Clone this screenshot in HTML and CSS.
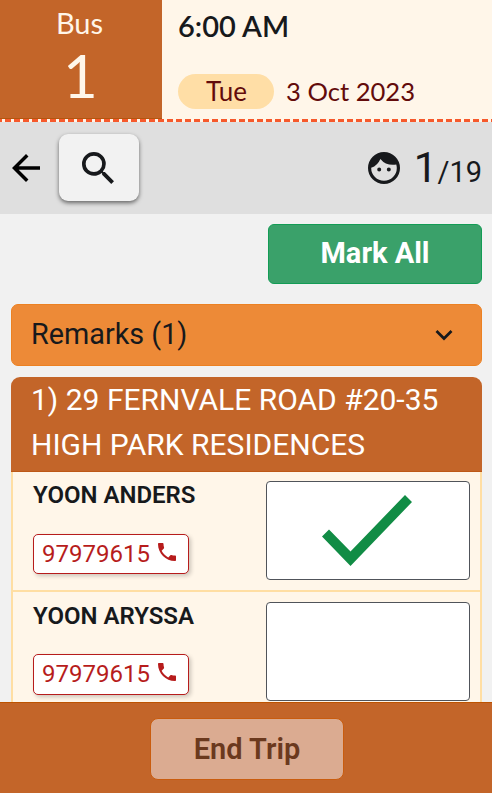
FILE: index.html
```html
<!DOCTYPE html>
<html lang="en">
<head>
<meta charset="utf-8">
<title>Bus 1</title>
<link rel="stylesheet" href="styles.css">
</head>
<body>
<div class="app">
  <header class="trip">
    <div class="bus"><span class="bus-label">Bus</span><span class="bus-number">1</span></div>
    <div class="schedule">
      <div class="time">6:00 AM</div>
      <div class="date"><span class="day">Tue</span><span class="full-date">3 Oct 2023</span></div>
    </div>
  </header>
  <div class="dashes"></div>
  <nav class="toolbar">
    <svg class="back" viewBox="4 4 16 16"><path d="M20 11H7.83l5.59-5.59L12 4l-8 8 8 8 1.41-1.41L7.83 13H20v-2z"/></svg>
    <button class="search"><svg viewBox="3 3 17.5 17.5"><path d="M15.5 14h-.79l-.28-.27A6.47 6.47 0 0 0 16 9.5 6.5 6.5 0 1 0 9.5 16c1.61 0 3.09-.59 4.23-1.57l.27.28v.79l5 4.99L20.49 19l-4.99-5zm-6 0a4.5 4.5 0 1 1 0-9 4.5 4.5 0 0 1 0 9z"/></svg></button>
    <div class="count">
      <svg class="face" viewBox="2 2 20 20"><path d="M10.25 13a1.25 1.25 0 1 1-2.5 0 1.25 1.25 0 0 1 2.5 0zM15 11.75a1.25 1.25 0 1 0 0 2.5 1.25 1.25 0 0 0 0-2.5zM22 12a10 10 0 1 1-20 0 10 10 0 0 1 20 0zm-2 0c0-.78-.12-1.53-.33-2.24-.7.15-1.42.24-2.17.24a10 10 0 0 1-7.76-3.69A10.02 10.02 0 0 1 4 11.86V12a8 8 0 0 0 16 0z"/></svg>
      <span class="present">1</span><span class="total">/19</span>
    </div>
  </nav>
  <main class="content">
    <button class="mark-all">Mark All</button>
    <div class="remarks"><span>Remarks (1)</span><svg class="chevron" viewBox="0 0 18 12"><path d="M1.500 2l7.500 7.500 7.500-7.500"/></svg></div>
    <section class="stop">
      <h2 class="address">1) 29 FERNVALE ROAD #20-35<br>HIGH PARK RESIDENCES</h2>
      <div class="rider">
        <div class="details">
          <div class="name">YOON ANDERS</div>
          <div class="phone">97979615<svg viewBox="3 3 18 18"><path d="M6.62 10.79c1.44 2.83 3.76 5.14 6.59 6.59l2.2-2.2c.27-.27.67-.36 1.02-.24 1.12.37 2.33.57 3.57.57.55 0 1 .45 1 1V20c0 .55-.45 1-1 1C10.61 21 3 13.39 3 4c0-.55.45-1 1-1h3.5c.55 0 1 .45 1 1 0 1.25.2 2.45.57 3.57.11.35.03.74-.25 1.02l-2.2 2.2z"/></svg></div>
        </div>
        <div class="mark"><svg viewBox="0 0 90 71"><path d="M0 41.500l7-7 21.500 22L83 0l7 7-61.500 64z"/></svg></div>
      </div>
      <div class="rider">
        <div class="details">
          <div class="name">YOON ARYSSA</div>
          <div class="phone">97979615<svg viewBox="3 3 18 18"><path d="M6.62 10.79c1.44 2.83 3.76 5.14 6.59 6.59l2.2-2.2c.27-.27.67-.36 1.02-.24 1.12.37 2.33.57 3.57.57.55 0 1 .45 1 1V20c0 .55-.45 1-1 1C10.61 21 3 13.39 3 4c0-.55.45-1 1-1h3.5c.55 0 1 .45 1 1 0 1.25.2 2.45.57 3.57.11.35.03.74-.25 1.02l-2.2 2.2z"/></svg></div>
        </div>
        <div class="mark"></div>
      </div>
    </section>
  </main>
  <footer class="actions"><button class="end-trip">End Trip</button></footer>
</div>
</body>
</html>
```
FILE: styles.css
```css
* { box-sizing: border-box; }
body { margin: 0; font-family: Roboto, "Liberation Sans", sans-serif; color: #17191c; }
button { border: 0; padding: 0; font-family: inherit; }
svg { display: block; fill: currentColor; }
.app { width: 492px; height: 793px; display: flex; flex-direction: column; overflow: hidden; background: #f1f1f1; }
.trip { height: 119px; flex: none; display: flex; background: #fff6e9; font-family: Lato, sans-serif; }
.bus { width: 162px; display: flex; flex-direction: column; align-items: center; padding-top: 5px; padding-right: 3px; background: #c36529; border-bottom: 1px solid #b4560f; color: #fff6e9; }
.bus-label { font-size: 29px; line-height: 35px; }
.bus-number { font-size: 60px; line-height: 70px; padding-left: 2px; }
.schedule { flex: 1; padding: 8px 0 0 16px; }
.time { font-size: 29px; line-height: 36px; font-weight: 600; }
.date { display: flex; align-items: center; gap: 12px; margin-top: 30px; font-size: 26px; line-height: 34px; color: #630b0b; }
.full-date { font-size: 25.600px; padding-bottom: 1px; }
.day { width: 96px; height: 35px; border-radius: 18px; background: #ffdea6; text-align: center; padding-left: 1px; }
.dashes { height: 3px; flex: none; background: repeating-linear-gradient(90deg, #f6592c 0 6px, #fff6e9 6px 9px) -4px 0 / 504px 3px; }
.toolbar { height: 92px; flex: none; display: flex; align-items: center; padding: 0 10px 1px 12px; background: #dfdfdf; }
.back { width: 28px; height: 28px; color: #000; }
.search { width: 80px; height: 67px; margin-left: 19px; border-radius: 9px; background: #f2f2f2; color: #17191c; box-shadow: 0 2px 4px rgba(0,0,0,.55); display: flex; align-items: center; justify-content: center; }
.search svg { width: 32px; height: 32px; margin-right: 2px; }
.count { margin-left: auto; display: flex; align-items: baseline; }
.face { width: 32px; height: 32px; align-self: center; margin-right: 14px; }
.present { font-size: 42px; line-height: 50px; }
.total { font-size: 29px; }
.content { flex: 1; min-height: 0; overflow: hidden; display: flex; flex-direction: column; padding: 10px 10px 0 11px; }
.mark-all { align-self: flex-end; flex: none; width: 214px; height: 60px; padding-bottom: 2px; border: 1px solid #139c55; border-radius: 6px; background: #3aa16a; color: #fff; font-size: 29px; font-weight: 700; }
.remarks { flex: none; display: flex; align-items: center; justify-content: space-between; height: 62px; margin-top: 20px; padding: 0 28px 0 19px; border: 1px solid #ec8122; border-radius: 7px; background: #ed8a37; font-size: 28.800px; }
.remarks span { padding-bottom: 2px; }
.chevron { width: 18px; height: 12px; fill: none; stroke: currentColor; stroke-width: 2.700; }
.stop { flex: none; margin-top: 11px; }
.address { margin: 0; height: 95px; padding: 0 20px; border-bottom: 1px solid #bd5817; border-radius: 9px 9px 0 0; background: #c36529; color: #fff; font-size: 30px; line-height: 45px; font-weight: 400; white-space: nowrap; }
.rider { display: flex; justify-content: space-between; height: 120px; padding: 9px 10px 0 20px; border: solid #ffdea3; border-width: 0 2px 2px; background: #fff6e9; }
.rider + .rider { padding-top: 10px; }
.name { font-size: 24px; line-height: 28px; font-weight: 600; }
.phone { display: flex; align-items: center; width: 156px; height: 40px; margin-top: 25px; padding: 0 0 0 8px; border: 1px solid #b71c1c; border-radius: 5px; background: #fff; box-shadow: 2px 2px 4px rgba(0,0,0,.2); color: #b71c1c; font-size: 24px; }
.rider + .rider .phone { height: 41px; margin-top: 24px; padding-bottom: 1px; }
.phone svg { width: 18px; height: 18px; margin: -4px 0 0 8px; }
.mark { width: 204px; height: 99px; border: 1px solid #50545a; border-radius: 4px; background: #fff; display: flex; align-items: center; justify-content: center; }
.mark svg { width: 90px; height: 71px; margin-right: 2px; color: #118c45; }
.actions { flex: none; height: 91px; display: flex; justify-content: center; align-items: center; padding: 2px 0 0 2px; border-top: 1px solid #bd5300; background: #c36529; }
.end-trip { width: 194px; height: 62px; border: 1px solid #c95c0e; border-radius: 8px; background: #dbab91; color: #6b391e; font-size: 29px; font-weight: 600; }
```
